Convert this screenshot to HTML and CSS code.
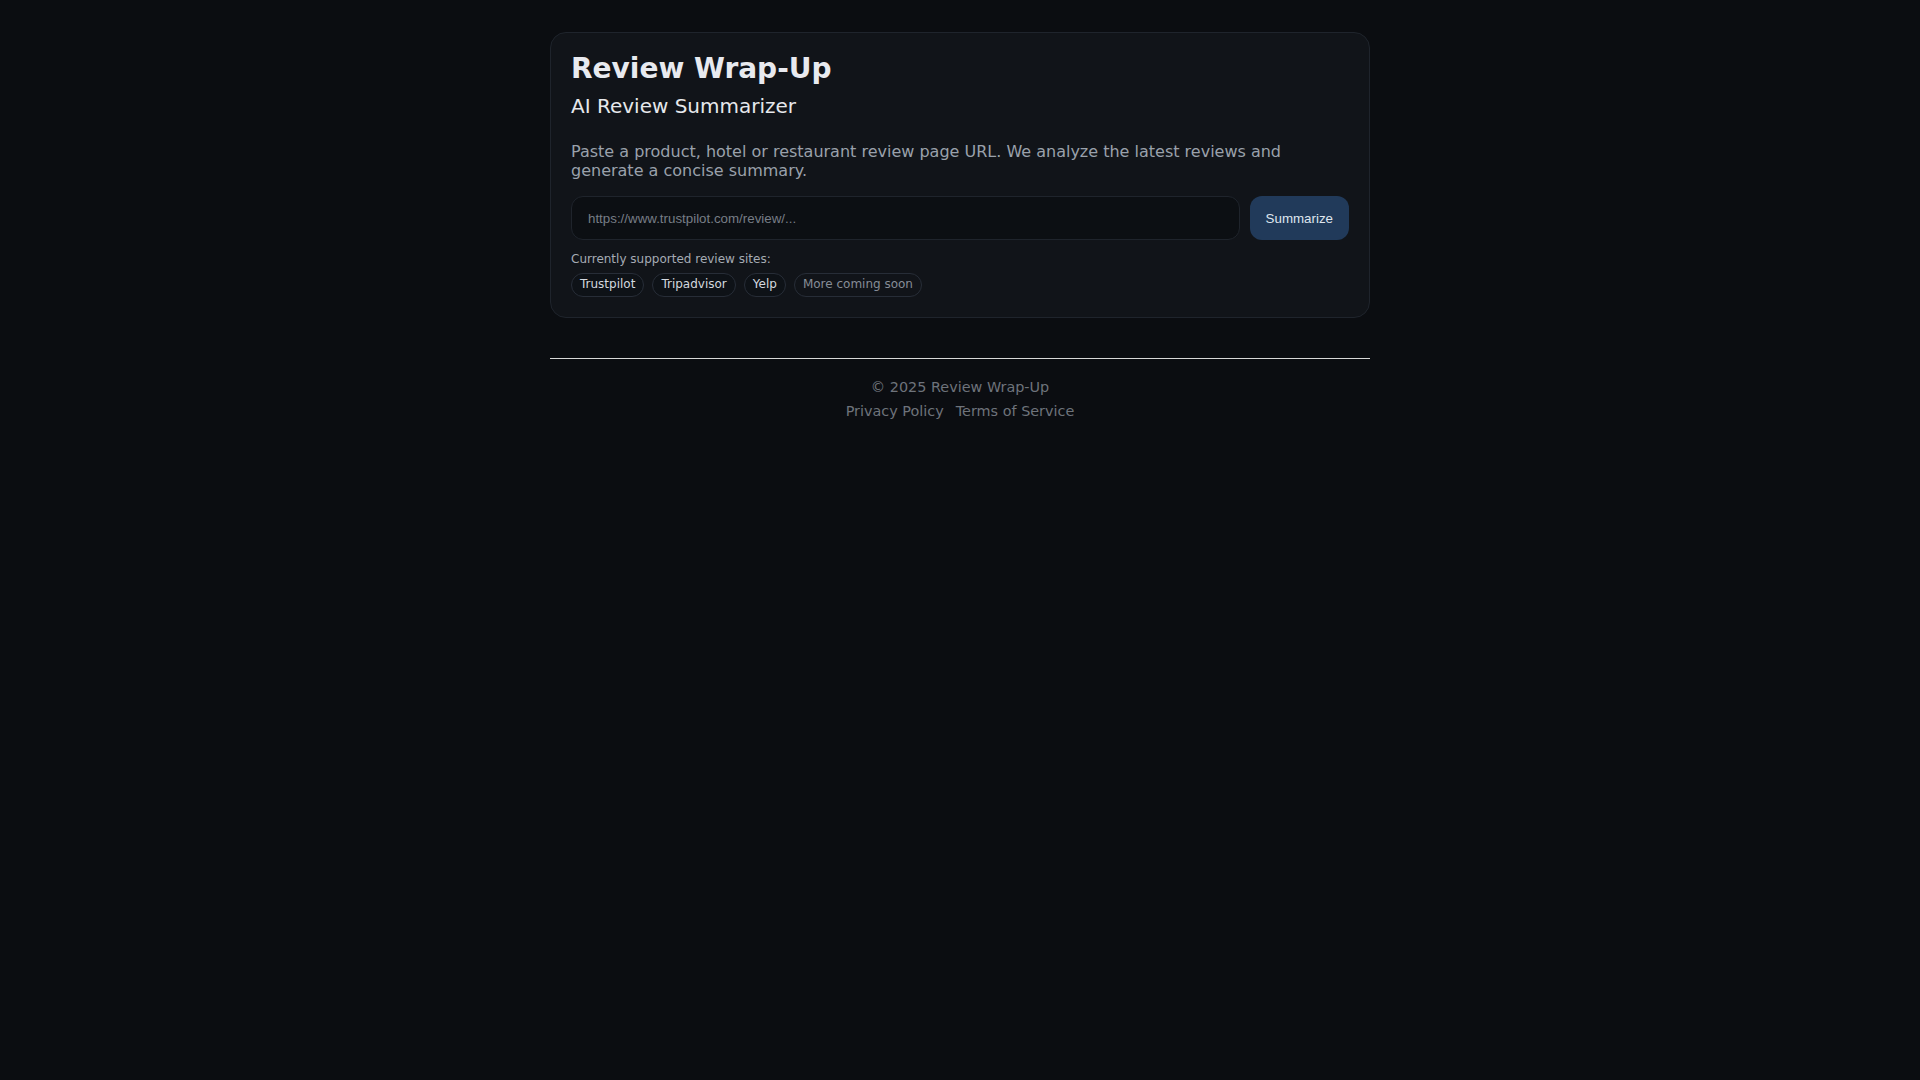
FILE: index.html
```html
<!DOCTYPE html>
<html lang="en">
<head>
<meta charset="utf-8">
<title>Review Wrap-Up</title>
<link rel="stylesheet" href="styles.css">
</head>
<body>
<main class="page">
  <section class="card">
    <h1 class="title">Review Wrap-Up</h1>
    <h2 class="subtitle">AI Review Summarizer</h2>
    <p class="intro">Paste a product, hotel or restaurant review page URL. We analyze the latest reviews and generate a concise summary.</p>
    <form class="url-form">
      <input class="url-input" type="text" placeholder="https://www.trustpilot.com/review/...">
      <button class="submit" type="button">Summarize</button>
    </form>
    <div class="supported">
      <div class="supported-label">Currently supported review sites:</div>
      <div class="chips">
        <span class="chip">Trustpilot</span>
        <span class="chip">Tripadvisor</span>
        <span class="chip">Yelp</span>
        <span class="chip chip-muted">More coming soon</span>
      </div>
    </div>
  </section>
  <footer class="footer">
    <div class="copy">© 2025 Review Wrap-Up</div>
    <nav class="links">
      <a href="#">Privacy Policy</a>
      <a href="#">Terms of Service</a>
    </nav>
  </footer>
</main>
</body>
</html>
```
FILE: styles.css
```css
* { box-sizing: border-box; }
html, body {
  margin: 0;
  background: #0b0d11;
  font-family: "DejaVu Sans", Verdana, sans-serif;
  color: #e6e8ec;
}
.page {
  max-width: 820px;
  margin: 32px auto 0;
}
.card {
  background: #111419;
  border: 1px solid #1f242c;
  border-radius: 16px;
  padding: 20px;
}
.title {
  margin: 0;
  font-size: 28px;
  line-height: 1.16;
  font-weight: 700;
  color: #e8eaef;
}
.subtitle {
  margin: 8.5px 0 0;
  font-size: 20px;
  line-height: 1.2;
  font-weight: 400;
  color: #e6e8ec;
}
.intro {
  margin: 24px 0 0;
  font-size: 16px;
  line-height: 1.2;
  color: #9aa1ab;
}
.url-form {
  display: flex;
  gap: 10px;
  margin-top: 16px;
}
.url-input {
  flex: 1;
  height: 44px;
  background: #0c0f13;
  border: 1px solid #1f242c;
  border-radius: 12px;
  padding: 0 16px;
  font-family: "Liberation Sans", Arial, sans-serif;
  font-size: 13.33px;
  color: #e6e8ec;
  outline: none;
}
.url-input::placeholder { color: #777d86; }
.submit {
  height: 44px;
  padding: 0 16px;
  border: none;
  border-radius: 12px;
  background: #213a5a;
  color: #dfe5ee;
  font-family: "Liberation Sans", Arial, sans-serif;
  font-size: 13.33px;
  cursor: pointer;
}
.supported { margin-top: 12px; }
.supported-label {
  font-size: 12px;
  line-height: 1.3;
  color: #a5abb4;
}
.chips {
  display: flex;
  gap: 8px;
  margin-top: 5px;
}
.chip {
  display: inline-block;
  font-size: 12px;
  line-height: 15px;
  padding: 3.5px 8px;
  border: 1px solid #272d37;
  border-radius: 999px;
  background: #0e1217;
  color: #d3d8df;
}
.chip-muted { color: #868d97; background: transparent; }
.footer {
  margin-top: 40px;
  border-top: 1px solid #d8d8d8;
  padding-top: 20px;
  text-align: center;
  font-size: 14.4px;
  line-height: 1.2;
  color: #6e737b;
}
.links {
  margin-top: 6.5px;
  display: flex;
  justify-content: center;
  gap: 12px;
}
.links a {
  color: #6e737b;
  text-decoration: none;
}
```
